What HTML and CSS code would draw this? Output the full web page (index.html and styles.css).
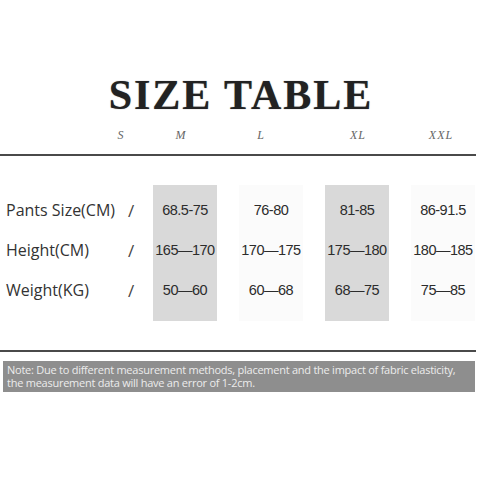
FILE: index.html
```html
<!DOCTYPE html>
<html>
<head>
<meta charset="utf-8">
<link rel="stylesheet" href="styles.css">
</head>
<body>
<div class="page">
  <h1 class="title">SIZE TABLE</h1>
  <div class="sizes">
    <span>S</span><span>M</span><span>L</span><span>XL</span><span>XXL</span>
  </div>
  <div class="rule"></div>
  <div class="table">
    <div class="col labels">
      <div class="cell">Pants Size(CM)</div>
      <div class="cell">Height(CM)</div>
      <div class="cell">Weight(KG)</div>
    </div>
    <div class="col slashes">
      <div class="cell">/</div>
      <div class="cell">/</div>
      <div class="cell">/</div>
    </div>
    <div class="col val dark">
      <div class="cell">68.5-75</div>
      <div class="cell">165&#8212;170</div>
      <div class="cell">50&#8212;60</div>
    </div>
    <div class="col val light">
      <div class="cell">76-80</div>
      <div class="cell">170&#8212;175</div>
      <div class="cell">60&#8212;68</div>
    </div>
    <div class="col val dark">
      <div class="cell">81-85</div>
      <div class="cell">175&#8212;180</div>
      <div class="cell">68&#8212;75</div>
    </div>
    <div class="col val light">
      <div class="cell">86-91.5</div>
      <div class="cell">180&#8212;185</div>
      <div class="cell">75&#8212;85</div>
    </div>
  </div>
  <div class="rule rule2"></div>
  <div class="note">Note: Due to different measurement methods, placement and the impact of fabric elasticity, the measurement data will have an error of 1-2cm.</div>
</div>
</body>
</html>
```
FILE: styles.css
```css
html, body {
  margin: 0;
  padding: 0;
  background: #ffffff;
}
.page {
  width: 480px;
  height: 480px;
  display: flex;
  flex-direction: column;
  font-family: "Open Sans", "Noto Sans", sans-serif;
  color: #2a2a2a;
}
.title {
  margin: 73px 0 0 0;
  height: 44px;
  line-height: 44px;
  text-align: center;
  font-family: "Liberation Serif", "DejaVu Serif", serif;
  font-weight: bold;
  font-size: 42px;
  letter-spacing: 2px;
  padding-left: 2px;
  color: #222;
  text-shadow: 0 0 1px #777;
}
.sizes {
  margin-top: 11px;
  display: grid;
  grid-template-columns: 101px 40px 80px 80px 114px 52px;
  font-family: "Liberation Serif", serif;
  font-style: italic;
  font-size: 12px;
  line-height: 14px;
  color: #666;
  letter-spacing: 1px;
}
.sizes span { text-align: center; }
.sizes span:first-child { grid-column: 2; }
.rule {
  margin-top: 12px;
  height: 2px;
  width: 476px;
  background: #4a4a4a;
}
.table {
  margin-top: 29px;
  display: flex;
  height: 136px;
}
.col {
  flex-shrink: 0;
  display: flex;
  flex-direction: column;
  padding-top: 5px;
}
.cell {
  height: 40px;
  display: flex;
  align-items: center;
}
.labels {
  width: 122px;
  padding-left: 6px;
  box-sizing: border-box;
  font-size: 16px;
  color: #333;
}
.slashes {
  width: 31px;
  font-size: 17px;
  color: #444;
}
.slashes .cell { justify-content: flex-start; padding-left: 6px; }
.val {
  width: 64px;
  margin-right: 22px;
  font-family: "Liberation Sans", sans-serif;
  font-size: 14.5px;
  color: #2c2c2c;
  letter-spacing: -0.5px;
}
.val:last-child { margin-right: 0; }
.val .cell { justify-content: center; white-space: nowrap; }
.dark { background: #d9d9d9; }
.light { background: #fbfbfb; }
.rule2 { margin-top: 29px; }
.note {
  margin: 9px 5px 0 3px;
  padding: 2px 3px 3px 4px;
  background: #8e8e8e;
  color: #ececec;
  font-size: 11px;
  line-height: 13px;
  letter-spacing: -0.25px;
}
```
